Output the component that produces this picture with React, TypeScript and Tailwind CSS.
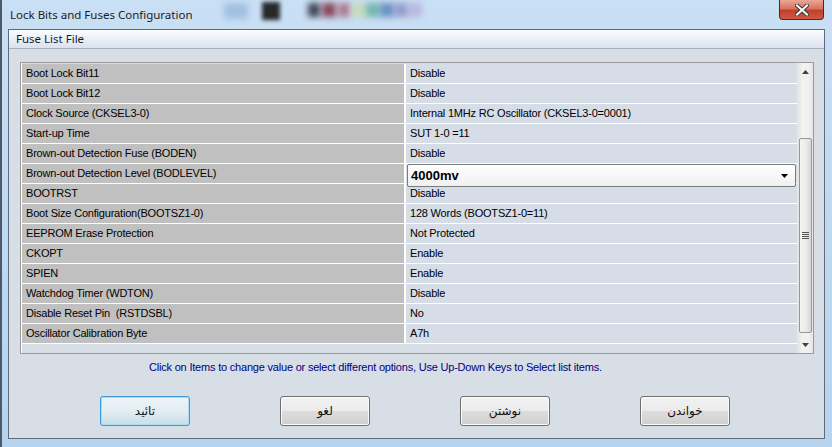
import React from "react";

const rows: [string, string | null][] = [
  ["Boot Lock Bit11", "Disable"],
  ["Boot Lock Bit12", "Disable"],
  ["Clock Source (CKSEL3-0)", "Internal 1MHz RC Oscillator (CKSEL3-0=0001)"],
  ["Start-up Time", "SUT 1-0 =11"],
  ["Brown-out Detection Fuse (BODEN)", "Disable"],
  ["Brown-out Detection Level (BODLEVEL)", null],
  ["BOOTRST", "Disable"],
  ["Boot Size Configuration(BOOTSZ1-0)", "128 Words (BOOTSZ1-0=11)"],
  ["EEPROM Erase Protection", "Not Protected"],
  ["CKOPT", "Enable"],
  ["SPIEN", "Enable"],
  ["Watchdog Timer (WDTON)", "Disable"],
  ["Disable Reset Pin  (RSTDSBL)", "No"],
  ["Oscillator Calibration Byte", "A7h"],
];

function Btn({ label, primary }: { label: string; primary?: boolean }) {
  return (
    <div
      className={
        primary
          ? "w-[90px] h-[30px] rounded-[3px] border border-[#3c9ad8] shadow-[inset_0_0_0_1px_#a8dcf7] bg-gradient-to-b from-[#eef4f8] via-[#e3edf3] to-[#cbdde8] flex items-center justify-center"
          : "w-[90px] h-[30px] rounded-[3px] border border-[#707070] shadow-[inset_0_0_0_1px_#fbfbfb] bg-[linear-gradient(to_bottom,#f2f2f2_0%,#ebebeb_50%,#dddddd_50%,#cfcfcf_100%)] flex items-center justify-center"
      }
    >
      <span className="text-[12px] text-[#111] font-['DejaVu_Sans',sans-serif]" dir="rtl">
        {label}
      </span>
    </div>
  );
}

export default function App() {
  return (
    <div className="w-[832px] h-[447px] flex flex-col bg-gradient-to-b from-[#c9dff4] to-[#b6d3ef] border-l-2 border-[#4a5a6a] overflow-hidden relative">
      {/* title bar */}
      <div className="h-[29px] flex items-start relative">
        <div className="absolute left-[222px] top-[3px] w-[24px] h-[16px] bg-[#8fb4dc] blur-[3px] opacity-70" />
        <div className="absolute left-[260px] top-[2px] w-[18px] h-[18px] bg-[#151515] blur-[2px] opacity-90" />
        <div className="absolute left-[306px] top-[3px] w-[12px] h-[14px] bg-[#2a2a3a] blur-[3px] opacity-85" />
        <div className="absolute left-[320px] top-[3px] w-[14px] h-[14px] bg-[#7a2035] blur-[3px] opacity-80" />
        <div className="absolute left-[336px] top-[3px] w-[12px] h-[14px] bg-[#a0506a] blur-[3px] opacity-70" />
        <div className="absolute left-[350px] top-[3px] w-[14px] h-[14px] bg-[#c8d8a0] blur-[3px] opacity-70" />
        <div className="absolute left-[364px] top-[3px] w-[14px] h-[14px] bg-[#50a890] blur-[3px] opacity-70" />
        <div className="absolute left-[378px] top-[3px] w-[14px] h-[14px] bg-[#4070b0] blur-[3px] opacity-70" />
        <div className="absolute left-[392px] top-[3px] w-[14px] h-[14px] bg-[#8080c0] blur-[3px] opacity-70" />
        <div className="absolute left-[406px] top-[3px] w-[14px] h-[14px] bg-[#b0a0d0] blur-[3px] opacity-60" />
        <span className="relative mt-[7px] ml-[8px] text-[11.5px] leading-[15px] text-[#1b1b1b] font-['Noto_Sans',sans-serif]">
          Lock Bits and Fuses Configuration
        </span>
        <div className="relative ml-auto mr-[8px] w-[45px] h-[20px] rounded-b-[4px] border border-t-0 border-[#5a2218] bg-[linear-gradient(to_bottom,#e9a895_0%,#d9735f_45%,#c0402a_55%,#cf5a44_100%)] flex items-center justify-center">
          <svg width="14" height="12" viewBox="0 0 14 12">
            <path d="M2 1.5 L12 10.5 M12 1.5 L2 10.5" stroke="#3a3a3a" strokeWidth="4" strokeLinecap="square" />
            <path d="M2 1.5 L12 10.5 M12 1.5 L2 10.5" stroke="#ffffff" strokeWidth="2" strokeLinecap="square" />
          </svg>
        </div>
      </div>

      {/* client area */}
      <div className="flex-1 ml-[6px] mr-[7px] mb-[8px] border border-[#5d6b7c] bg-[#d7dee6] flex flex-col">
        {/* menu bar */}
        <div className="h-[19px] border-b border-[#a5b0c3] bg-gradient-to-b from-[#fbfcfe] to-[#dbe1ef] flex items-center">
          <span className="ml-[7px] text-[11.5px] text-[#1b1b1b] font-['Noto_Sans',sans-serif]">Fuse List File</span>
        </div>

        <div className="flex flex-col pl-[11px] pt-[13px]">
          {/* grid */}
          <div className="w-[794px] h-[292px] border border-[#9a9a9a] flex bg-[#d7dee6]">
            <div className="flex-1 flex flex-col border-l border-white pt-[1px]">
              {rows.map(([k, v], i) => (
                <div key={i} className="h-[20px] flex border-b border-white shrink-0">
                  <div className="w-[384px] bg-[#c0c0c0] border-r-2 border-white flex items-center pl-[4px]">
                    <span className="text-[11px] tracking-[-0.2px] text-black font-['Liberation_Sans',sans-serif] whitespace-pre">{k}</span>
                  </div>
                  <div className="flex-1 bg-[#d6dde6] flex items-center pl-[4px] relative">
                    {v !== null ? (
                      <span className="text-[11px] tracking-[-0.2px] text-black font-['Liberation_Sans',sans-serif]">{v}</span>
                    ) : (
                      <div className="absolute left-[1px] right-[1px] top-0 h-[23px] z-10 rounded-[2px] border border-[#7b7b7b] bg-gradient-to-b from-[#ffffff] to-[#f0f0f0] flex items-center pl-[3px] pr-[7px]">
                        <span className="text-[13px] font-bold text-black font-['Liberation_Sans',sans-serif]">4000mv</span>
                        <svg className="ml-auto" width="7" height="4" viewBox="0 0 7 4">
                          <path d="M0 0 L7 0 L3.5 4 Z" fill="#000" />
                        </svg>
                      </div>
                    )}
                  </div>
                </div>
              ))}
            </div>
            {/* scrollbar */}
            <div className="w-[16px] flex flex-col bg-[linear-gradient(to_right,#e3e3e3,#f2f2f2_30%,#f0f0f0_70%,#e6e6e6)] border-l border-[#e8e8e8]">
              <div className="h-[17px] flex items-center justify-center">
                <svg width="7" height="4" viewBox="0 0 7 4">
                  <path d="M0 4 L7 4 L3.5 0 Z" fill="#404040" />
                </svg>
              </div>
              <div className="flex-1 pt-[58px] px-[1px]">
                <div className="h-[195px] rounded-[2px] border border-[#979797] bg-[linear-gradient(to_right,#f4f4f4,#ececec_50%,#d8d8d8)] flex items-center justify-center">
                  <div className="flex flex-col gap-[1px]">
                    <div className="w-[7px] h-[1px] bg-[#555]" />
                    <div className="w-[7px] h-[1px] bg-[#555]" />
                    <div className="w-[7px] h-[1px] bg-[#555]" />
                    <div className="w-[7px] h-[1px] bg-[#555]" />
                  </div>
                </div>
              </div>
              <div className="h-[17px] flex items-center justify-center">
                <svg width="7" height="4" viewBox="0 0 7 4">
                  <path d="M0 0 L7 0 L3.5 4 Z" fill="#404040" />
                </svg>
              </div>
            </div>
          </div>

          {/* hint */}
          <div className="h-[12px] mt-[7px] pl-[129px] flex items-center">
            <span className="text-[11px] tracking-[-0.2px] text-[#000080] font-['Liberation_Sans',sans-serif] whitespace-nowrap">
              Click on Items to change value or select different options, Use Up-Down Keys to Select list items.
            </span>
          </div>

          {/* buttons */}
          <div className="flex gap-[90px] pl-[80px] mt-[23px]">
            <Btn label="تائيد" primary />
            <Btn label="لغو" />
            <Btn label="نوشتن" />
            <Btn label="خواندن" />
          </div>
        </div>
      </div>
    </div>
  );
}
